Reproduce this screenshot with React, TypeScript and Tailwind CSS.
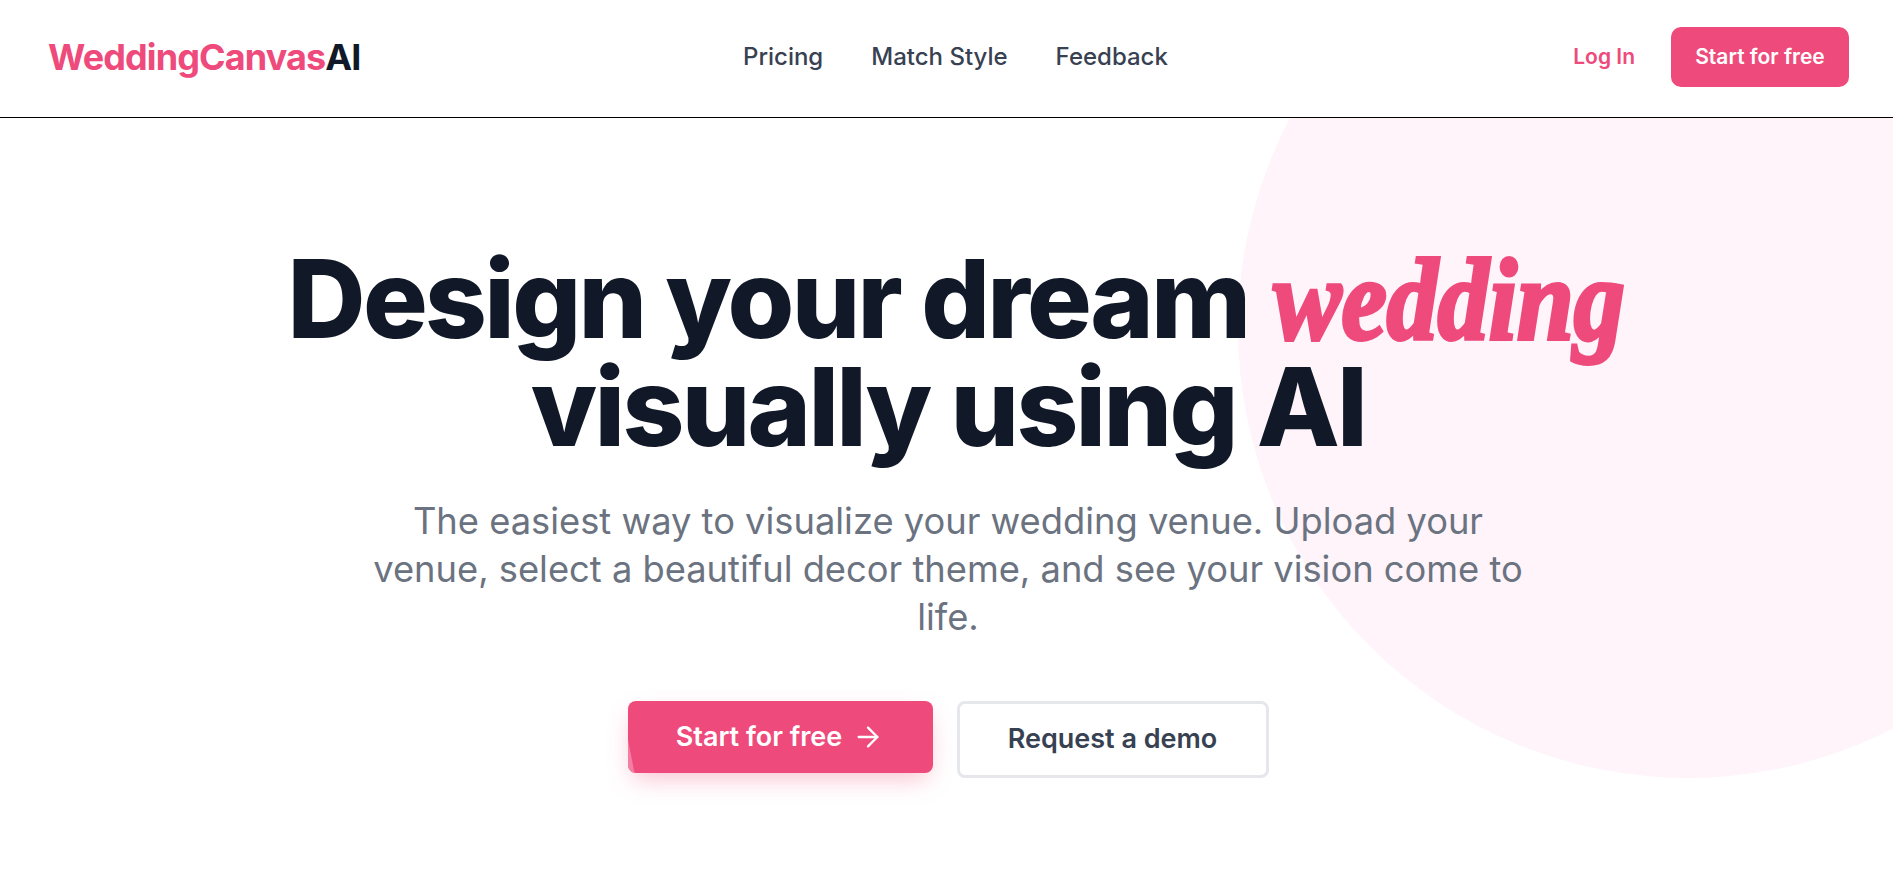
import { ArrowRight } from "lucide-react";

const font = { fontFamily: "Inter, sans-serif" };

export default function App() {
  return (
    <div className="min-h-screen bg-white" style={font}>
      <header className="flex h-[118px] items-center border-b border-black pb-[3px] pl-12 pr-11">
        <a className="w-[313px] text-[36px] font-bold tracking-tight text-[#ee4a7b]">
          WeddingCanvas<span className="text-[#111827]">AI</span>
        </a>
        <nav className="ml-[382px] flex items-center gap-12 text-[24px] font-medium text-[#374151]">
          <a>Pricing</a>
          <a>Match Style</a>
          <a>Feedback</a>
        </nav>
        <div className="ml-auto flex items-center gap-9">
          <a className="text-[21px] font-semibold text-[#ee4a7b]">Log In</a>
          <button className="h-[60px] w-[178px] rounded-[10px] bg-[#ee4a7b] text-[21px] font-semibold text-white">
            Start for free
          </button>
        </div>
      </header>

      <main className="relative h-[753px] overflow-hidden">
        {/* pink circle behind the hero */}
        <div className="absolute left-[1238px] top-[-240px] h-[900px] w-[900px] rounded-full bg-[#fef4fa]" />
        <div className="relative flex flex-col items-center pl-[3px] pt-[127px]">
          <h1 className="whitespace-nowrap text-center text-[108px] font-extrabold leading-[108px] tracking-tight text-[#111827]">
            Design your dream{" "}
            <span
              className="mb-[-10px] ml-[4px] inline-block w-[335px] origin-[50%_75%] scale-y-[1.15] text-left text-[102px] font-bold italic leading-none tracking-normal text-[#ee4a7b] [-webkit-text-stroke:3.5px_#ee4a7b]"
              style={{ fontFamily: '"Liberation Serif", serif' }}
            >
              wedding
            </span>
            <br />
            visually using AI
          </h1>
          <p className="mt-[36px] w-[1152px] text-center text-[36.3px] leading-[48px] text-[#6b7280]">
            The easiest way to visualize your wedding venue. Upload your venue, select a beautiful decor theme, and see your vision come to life.
          </p>
          <div className="mt-[60px] flex items-start gap-6">
            <button className="relative flex h-[72px] w-[305px] items-center justify-center gap-2.5 overflow-hidden rounded-lg bg-[#ee4a7b] text-[27px] font-semibold text-white shadow-[0_10px_25px_-5px_rgba(238,74,123,0.35)]">
              <span className="absolute bottom-0 left-0 h-[36px] w-[7px] bg-[#f27fa3] [clip-path:polygon(0_0,100%_100%,0_100%)]" />
              Start for free
              <ArrowRight size={32} strokeWidth={1.75} />
            </button>
            <button className="h-[77px] w-[312px] rounded-lg border-[3px] border-[#e5e7eb] bg-white text-[27px] font-semibold text-[#374151]">
              Request a demo
            </button>
          </div>
        </div>
      </main>
    </div>
  );
}
